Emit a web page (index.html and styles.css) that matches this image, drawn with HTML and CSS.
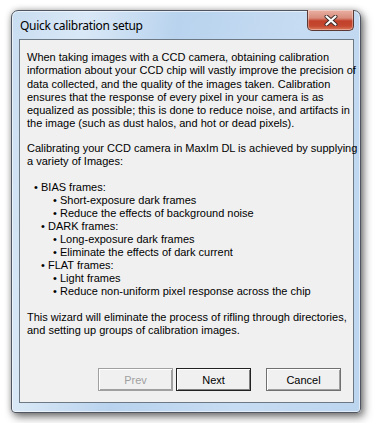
FILE: index.html
```html
<!DOCTYPE html>
<html lang="en">
<head>
  <meta charset="UTF-8" />
  <title>Quick calibration setup</title>
  <link rel="stylesheet" href="styles.css">
</head>
<body>
  <div class="window">
    <!-- Title bar -->
    <div class="titlebar">
      <span class="title">Quick calibration setup</span>
      <div class="close-btn">
        <svg width="14" height="11" viewBox="0 0 14 11">
          <path d="M2.5 1.5 L11.5 9.5 M11.5 1.5 L2.5 9.5" stroke="#3b2a28" stroke-width="4" stroke-linecap="round" />
          <path d="M2.5 1.5 L11.5 9.5 M11.5 1.5 L2.5 9.5" stroke="#fff" stroke-width="2.2" stroke-linecap="round" />
        </svg>
      </div>
    </div>

    <!-- Client area -->
    <div class="client">
      <div class="content">
        <p class="para">When taking images with a CCD camera, obtaining calibration<br>information about your CCD chip will vastly improve the precision of<br>data collected, and the quality of the images taken. Calibration<br>ensures that the response of every pixel in your camera is as<br>equalized as possible; this is done to reduce noise, and artifacts in<br>the image (such as dust halos, and hot or dead pixels).</p>

        <p class="para">Calibrating your CCD camera in MaxIm DL is achieved by supplying<br>a variety of Images:</p>

        <ul class="frames">
          <li class="lvl1 first">BIAS frames:</li>
          <li class="lvl2">Short-exposure dark frames</li>
          <li class="lvl2">Reduce the effects of background noise</li>
          <li class="lvl1">DARK frames:</li>
          <li class="lvl2">Long-exposure dark frames</li>
          <li class="lvl2">Eliminate the effects of dark current</li>
          <li class="lvl1">FLAT frames:</li>
          <li class="lvl2">Light frames</li>
          <li class="lvl2">Reduce non-uniform pixel response across the chip</li>
        </ul>

        <p class="para">This wizard will eliminate the process of rifling through directories,<br>and setting up groups of calibration images.</p>
      </div>

      <div class="buttons">
        <button class="btn" disabled>Prev</button>
        <button class="btn default">Next</button>
        <button class="btn cancel">Cancel</button>
      </div>
    </div>
  </div>
</body>
</html>
```

FILE: styles.css
```css
* {
  margin: 0;
  padding: 0;
  box-sizing: border-box;
}

body {
  background: #fff;
  width: 375px;
  height: 423px;
  overflow: hidden;
  font-family: 'Liberation Sans', Arial, sans-serif;
}

.window {
  margin: 10px 0 0 11px;
  width: 350px;
  height: 403px;
  display: flex;
  flex-direction: column;
  padding: 0 6px 9px 7px;
  border: 1px solid #4f5661;
  border-radius: 7px 7px 4px 4px;
  background: linear-gradient(100deg, #c9ddf1 0%, #d9e8f6 18%, #b9d3ee 40%, #c6dcf2 70%, #bcd5ef 100%);
  box-shadow: inset 0 0 0 1px rgba(255, 255, 255, 0.55),
              3px 4px 9px rgba(0, 0, 0, 0.5),
              0 0 6px rgba(0, 0, 0, 0.25);
}

.titlebar {
  height: 28px;
  display: flex;
  align-items: flex-start;
}

.title {
  font-family: 'Noto Sans', 'Open Sans', sans-serif;
  font-size: 12px;
  letter-spacing: -0.3px;
  color: #000;
  padding: 7px 0 0 1px;
  line-height: 16px;
}

.close-btn {
  margin: -1px 0 0 auto;
  width: 47px;
  height: 21px;
  border: 1px solid #5b3a35;
  border-top: none;
  border-radius: 0 0 5px 5px;
  background: linear-gradient(to bottom, #e9b1a4 0%, #d98d7c 40%, #c2402a 55%, #c4482f 80%, #dc7a5c 100%);
  box-shadow: inset 0 0 0 1px rgba(255, 255, 255, 0.35);
  display: flex;
  justify-content: center;
  align-items: center;
}

.client {
  flex: 1;
  display: flex;
  flex-direction: column;
  background: #f0f0f0;
  border: 1px solid #6d7885;
  padding: 11px 12px 11px 7px;
  font-size: 11px;
  line-height: 13.25px;
  color: #000;
}

.content {
  white-space: nowrap;
}

.para {
  margin-bottom: 11px;
}

.frames {
  list-style: none;
  line-height: 13px;
  margin-top: 13px;
  margin-bottom: 13px;
}

.frames li::before {
  content: '\2022';
  display: inline-block;
  width: 7px;
}

.lvl1 {
  padding-left: 14px;
}

.lvl1.first {
  padding-left: 7px;
}

.lvl2 {
  padding-left: 26px;
}

.buttons {
  margin-top: auto;
  display: flex;
  justify-content: flex-end;
}

.btn {
  width: 75px;
  height: 23px;
  font-family: 'Liberation Sans', Arial, sans-serif;
  font-size: 11px;
  color: #000;
  background: #f0f0f0;
  border: 1px solid #a0a0a0;
  box-shadow: inset 1px 1px 0 #fff, inset -1px -1px 0 #a0a0a0;
  margin-left: 3px;
}

.btn:disabled {
  color: #a0a0a0;
}

.btn.default {
  border-color: #222;
  box-shadow: inset 1px 1px 0 #fff, inset -1px -1px 0 #808080;
}

.btn.cancel {
  margin-left: 15px;
  border-color: #707070;
}
```
